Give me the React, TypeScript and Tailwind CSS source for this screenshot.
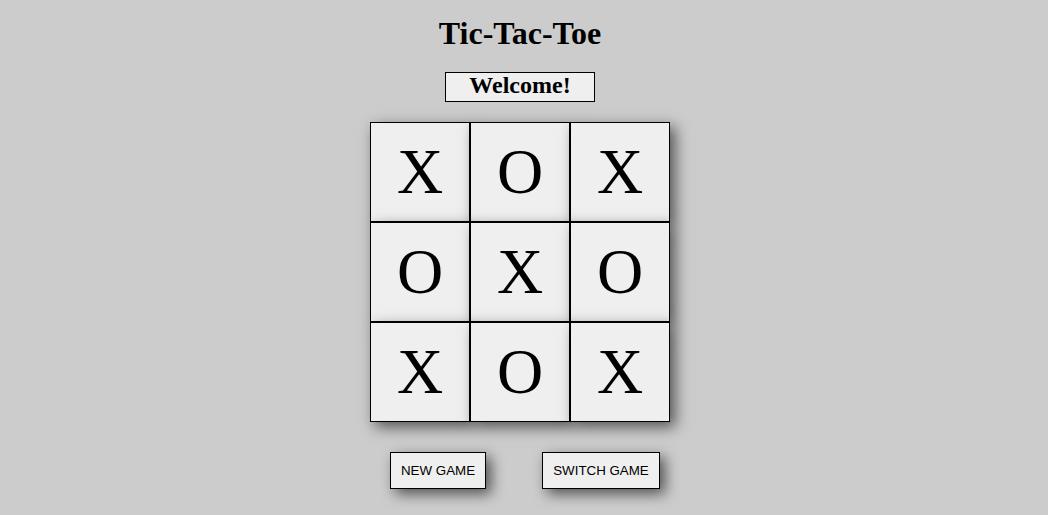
import React from 'react';

const BOARD = ['X', 'O', 'X', 'O', 'X', 'O', 'X', 'O', 'X'];

const App: React.FC = () => {
  return (
    <div className="min-h-screen w-full bg-[#cccccc]">
      <div className="w-[1040px] flex flex-col items-center pt-[15px] font-['Liberation_Serif',serif] text-black">
        <h1 className="text-[32px] leading-[36px] font-bold">Tic-Tac-Toe</h1>

        <div className="mt-[21px] w-[150px] h-[30px] border border-black bg-[#efefef] text-center">
          <h2 className="text-[24px] leading-[24px] font-bold">Welcome!</h2>
        </div>

        {/* board */}
        <div className="mt-[20px] grid grid-cols-[100px_100px_100px]">
          {BOARD.map((mark, i) => (
            <div
              key={i}
              className="w-[100px] h-[100px] border border-black bg-[#efefef] flex items-center justify-center shadow-[5px_5px_14px_rgba(0,0,0,0.6)]"
            >
              <span className="text-[64px] leading-[70px]">{mark}</span>
            </div>
          ))}
        </div>

        <div className="mt-[30px] flex gap-[56px] pl-[10px] font-['Liberation_Sans',Arial,sans-serif]">
          <button className="w-[96px] h-[37px] border border-black bg-[#efefef] text-[13.33px] text-black shadow-[5px_5px_14px_rgba(0,0,0,0.6)]">
            NEW GAME
          </button>
          <button className="w-[118px] h-[37px] border border-black bg-[#efefef] text-[13.33px] text-black shadow-[5px_5px_14px_rgba(0,0,0,0.6)]">
            SWITCH GAME
          </button>
        </div>
      </div>
    </div>
  );
};

export default App;
